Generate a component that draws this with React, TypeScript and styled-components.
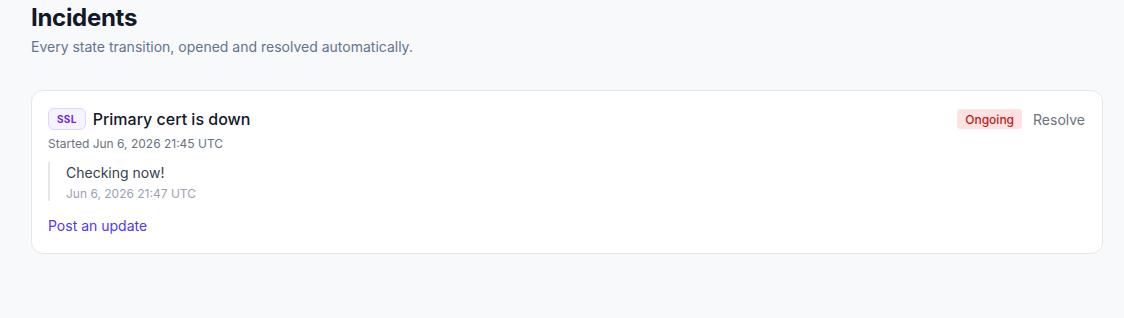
import React from "react";
import styled, { createGlobalStyle } from "styled-components";

const Global = createGlobalStyle`
  html, body { margin: 0; padding: 0; background: #f8f9fb; }
  body { font-family: Inter, "Noto Sans", sans-serif; -webkit-font-smoothing: antialiased; }
  * { box-sizing: border-box; }
`;

const Page = styled.div`
  padding: 2px 21px 40px 31px;
  min-height: 318px;
  background: #f8f9fb;
`;

const Title = styled.h1`
  margin: 0;
  font-size: 24px;
  line-height: 32px;
  font-weight: 700;
  color: #111827;
  letter-spacing: -0.3px;
`;

const Subtitle = styled.p`
  margin: 3px 0 0;
  font-size: 14px;
  line-height: 20px;
  color: #62748e;
`;

const Card = styled.div`
  margin-top: 33px;
  background: #fff;
  border: 1px solid #e5e7eb;
  border-radius: 12px;
  padding: 16px 17px 17px 16px;
`;

const Header = styled.div`
  display: flex;
  align-items: center;
  justify-content: space-between;
`;

const Left = styled.div`
  display: flex;
  align-items: center;
  gap: 7px;
`;

const Tag = styled.span`
  display: inline-flex;
  align-items: center;
  height: 22px;
  padding: 0 8px;
  border: 1px solid #ddd6fe;
  background: #f5f3ff;
  color: #6d28d9;
  border-radius: 6px;
  font-size: 10px;
  font-weight: 700;
  letter-spacing: 0.3px;
`;

const Name = styled.span`
  font-size: 16px;
  line-height: 24px;
  font-weight: 500;
  color: #111827;
`;

const Right = styled.div`
  display: flex;
  align-items: center;
  gap: 11px;
`;

const Status = styled.span`
  display: inline-flex;
  align-items: center;
  height: 20px;
  padding: 0 8px;
  border-radius: 4px;
  background: #fee2e2;
  color: #b91c1c;
  font-size: 12px;
  font-weight: 500;
`;

const Resolve = styled.button`
  border: 0;
  background: none;
  padding: 0;
  font: inherit;
  font-size: 14px;
  color: #6b7280;
  cursor: pointer;
`;

const Meta = styled.div`
  margin-top: 5px;
  font-size: 12px;
  line-height: 16px;
  color: #6b7280;
`;

const Updates = styled.div`
  margin-top: 10px;
  border-left: 2px solid #e5e7eb;
  padding: 0 0 0 16px;
`;

const UpdateText = styled.div`
  font-size: 14px;
  line-height: 22px;
  color: #374151;
`;

const UpdateTime = styled.div`
  margin-top: 3px;
  font-size: 12px;
  line-height: 14px;
  color: #9ca3af;
`;

const PostLink = styled.a`
  display: block;
  width: max-content;
  margin-top: 15px;
  font-size: 14px;
  line-height: 20px;
  color: #4f39f6;
  text-decoration: none;
  cursor: pointer;
`;

export default function App() {
  return (
    <>
      <Global />
      <Page>
        <Title>Incidents</Title>
        <Subtitle>Every state transition, opened and resolved automatically.</Subtitle>
        <Card>
          <Header>
            <Left>
              <Tag>SSL</Tag>
              <Name>Primary cert is down</Name>
            </Left>
            <Right>
              <Status>Ongoing</Status>
              <Resolve>Resolve</Resolve>
            </Right>
          </Header>
          <Meta>Started Jun 6, 2026 21:45 UTC</Meta>
          <Updates>
            <UpdateText>Checking now!</UpdateText>
            <UpdateTime>Jun 6, 2026 21:47 UTC</UpdateTime>
          </Updates>
          <PostLink>Post an update</PostLink>
        </Card>
      </Page>
    </>
  );
}
